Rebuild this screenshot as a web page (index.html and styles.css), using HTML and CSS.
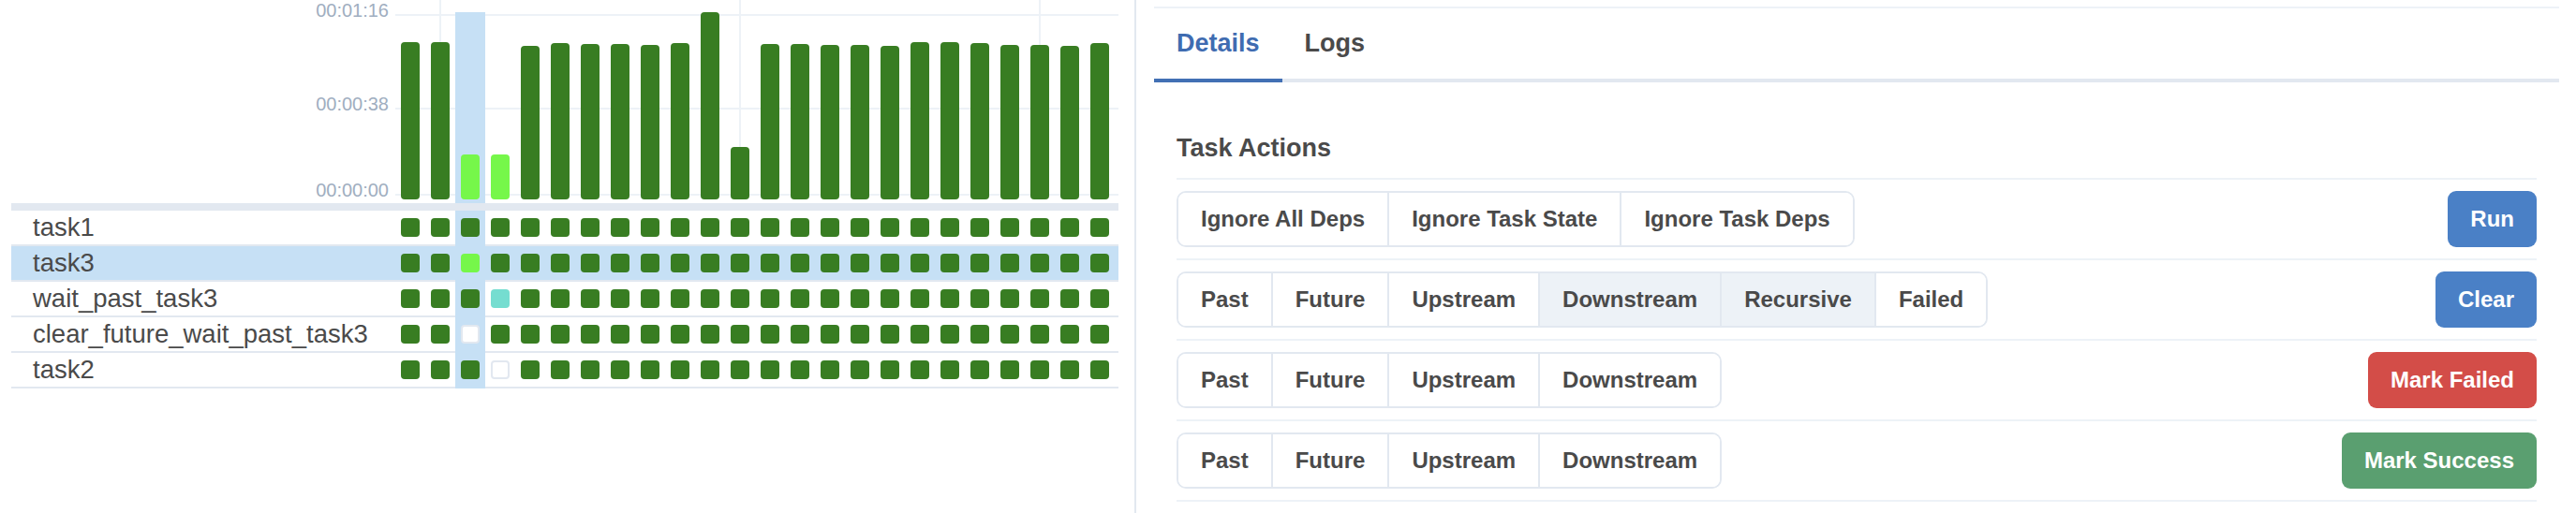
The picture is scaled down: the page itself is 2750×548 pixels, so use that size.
FILE: index.html
```html
<!DOCTYPE html>
<html lang="en">
<head>
<meta charset="utf-8">
<title>Grid</title>
<link rel="stylesheet" href="styles.css">
</head>
<body>
<div class="page">
  <section class="grid-panel">
    <div class="chart">
      <div class="axis">
        <span class="axis-label l-top">00:01:16</span>
        <span class="axis-label l-mid">00:00:38</span>
        <span class="axis-label l-bot">00:00:00</span>
      </div>
      <div class="plot">
        <div class="gl-h h1"></div>
        <div class="gl-h h2"></div>
        <div class="gl-h h3"></div>
        <div class="gl-v v1"></div>
        <div class="gl-v v2"></div>
        <div class="gl-v v3"></div>
        <div class="col"><div class="bar" style="height:168px"></div></div>
        <div class="col"><div class="bar" style="height:168px"></div></div>
        <div class="col hl"><div class="bar lime" style="height:48px"></div></div>
        <div class="col"><div class="bar lime" style="height:48px"></div></div>
        <div class="col"><div class="bar" style="height:164px"></div></div>
        <div class="col"><div class="bar" style="height:167px"></div></div>
        <div class="col"><div class="bar" style="height:166px"></div></div>
        <div class="col"><div class="bar" style="height:166px"></div></div>
        <div class="col"><div class="bar" style="height:165px"></div></div>
        <div class="col"><div class="bar" style="height:167px"></div></div>
        <div class="col"><div class="bar" style="height:200px"></div></div>
        <div class="col"><div class="bar" style="height:56px"></div></div>
        <div class="col"><div class="bar" style="height:166px"></div></div>
        <div class="col"><div class="bar" style="height:166px"></div></div>
        <div class="col"><div class="bar" style="height:165px"></div></div>
        <div class="col"><div class="bar" style="height:165px"></div></div>
        <div class="col"><div class="bar" style="height:164px"></div></div>
        <div class="col"><div class="bar" style="height:168px"></div></div>
        <div class="col"><div class="bar" style="height:168px"></div></div>
        <div class="col"><div class="bar" style="height:167px"></div></div>
        <div class="col"><div class="bar" style="height:165px"></div></div>
        <div class="col"><div class="bar" style="height:165px"></div></div>
        <div class="col"><div class="bar" style="height:164px"></div></div>
        <div class="col"><div class="bar" style="height:167px"></div></div>
      </div>
    </div>
    <div class="sep"></div>
    <div class="rows">
      <div class="row">
        <div class="name">task1</div>
        <div class="cells">
          <div class="cell"><div class="sq"></div></div><div class="cell"><div class="sq"></div></div><div class="cell hl"><div class="sq"></div></div><div class="cell"><div class="sq"></div></div>
          <div class="cell"><div class="sq"></div></div><div class="cell"><div class="sq"></div></div><div class="cell"><div class="sq"></div></div><div class="cell"><div class="sq"></div></div>
          <div class="cell"><div class="sq"></div></div><div class="cell"><div class="sq"></div></div><div class="cell"><div class="sq"></div></div><div class="cell"><div class="sq"></div></div>
          <div class="cell"><div class="sq"></div></div><div class="cell"><div class="sq"></div></div><div class="cell"><div class="sq"></div></div><div class="cell"><div class="sq"></div></div>
          <div class="cell"><div class="sq"></div></div><div class="cell"><div class="sq"></div></div><div class="cell"><div class="sq"></div></div><div class="cell"><div class="sq"></div></div>
          <div class="cell"><div class="sq"></div></div><div class="cell"><div class="sq"></div></div><div class="cell"><div class="sq"></div></div><div class="cell"><div class="sq"></div></div>
        </div>
      </div>
      <div class="row sel">
        <div class="name">task3</div>
        <div class="cells">
          <div class="cell"><div class="sq"></div></div><div class="cell"><div class="sq"></div></div><div class="cell hl"><div class="sq lime"></div></div><div class="cell"><div class="sq"></div></div>
          <div class="cell"><div class="sq"></div></div><div class="cell"><div class="sq"></div></div><div class="cell"><div class="sq"></div></div><div class="cell"><div class="sq"></div></div>
          <div class="cell"><div class="sq"></div></div><div class="cell"><div class="sq"></div></div><div class="cell"><div class="sq"></div></div><div class="cell"><div class="sq"></div></div>
          <div class="cell"><div class="sq"></div></div><div class="cell"><div class="sq"></div></div><div class="cell"><div class="sq"></div></div><div class="cell"><div class="sq"></div></div>
          <div class="cell"><div class="sq"></div></div><div class="cell"><div class="sq"></div></div><div class="cell"><div class="sq"></div></div><div class="cell"><div class="sq"></div></div>
          <div class="cell"><div class="sq"></div></div><div class="cell"><div class="sq"></div></div><div class="cell"><div class="sq"></div></div><div class="cell"><div class="sq"></div></div>
        </div>
      </div>
      <div class="row">
        <div class="name">wait_past_task3</div>
        <div class="cells">
          <div class="cell"><div class="sq"></div></div><div class="cell"><div class="sq"></div></div><div class="cell hl"><div class="sq"></div></div><div class="cell"><div class="sq teal"></div></div>
          <div class="cell"><div class="sq"></div></div><div class="cell"><div class="sq"></div></div><div class="cell"><div class="sq"></div></div><div class="cell"><div class="sq"></div></div>
          <div class="cell"><div class="sq"></div></div><div class="cell"><div class="sq"></div></div><div class="cell"><div class="sq"></div></div><div class="cell"><div class="sq"></div></div>
          <div class="cell"><div class="sq"></div></div><div class="cell"><div class="sq"></div></div><div class="cell"><div class="sq"></div></div><div class="cell"><div class="sq"></div></div>
          <div class="cell"><div class="sq"></div></div><div class="cell"><div class="sq"></div></div><div class="cell"><div class="sq"></div></div><div class="cell"><div class="sq"></div></div>
          <div class="cell"><div class="sq"></div></div><div class="cell"><div class="sq"></div></div><div class="cell"><div class="sq"></div></div><div class="cell"><div class="sq"></div></div>
        </div>
      </div>
      <div class="row">
        <div class="name">clear_future_wait_past_task3</div>
        <div class="cells">
          <div class="cell"><div class="sq"></div></div><div class="cell"><div class="sq"></div></div><div class="cell hl"><div class="sq empty"></div></div><div class="cell"><div class="sq"></div></div>
          <div class="cell"><div class="sq"></div></div><div class="cell"><div class="sq"></div></div><div class="cell"><div class="sq"></div></div><div class="cell"><div class="sq"></div></div>
          <div class="cell"><div class="sq"></div></div><div class="cell"><div class="sq"></div></div><div class="cell"><div class="sq"></div></div><div class="cell"><div class="sq"></div></div>
          <div class="cell"><div class="sq"></div></div><div class="cell"><div class="sq"></div></div><div class="cell"><div class="sq"></div></div><div class="cell"><div class="sq"></div></div>
          <div class="cell"><div class="sq"></div></div><div class="cell"><div class="sq"></div></div><div class="cell"><div class="sq"></div></div><div class="cell"><div class="sq"></div></div>
          <div class="cell"><div class="sq"></div></div><div class="cell"><div class="sq"></div></div><div class="cell"><div class="sq"></div></div><div class="cell"><div class="sq"></div></div>
        </div>
      </div>
      <div class="row">
        <div class="name">task2</div>
        <div class="cells">
          <div class="cell"><div class="sq"></div></div><div class="cell"><div class="sq"></div></div><div class="cell hl"><div class="sq"></div></div><div class="cell"><div class="sq empty"></div></div>
          <div class="cell"><div class="sq"></div></div><div class="cell"><div class="sq"></div></div><div class="cell"><div class="sq"></div></div><div class="cell"><div class="sq"></div></div>
          <div class="cell"><div class="sq"></div></div><div class="cell"><div class="sq"></div></div><div class="cell"><div class="sq"></div></div><div class="cell"><div class="sq"></div></div>
          <div class="cell"><div class="sq"></div></div><div class="cell"><div class="sq"></div></div><div class="cell"><div class="sq"></div></div><div class="cell"><div class="sq"></div></div>
          <div class="cell"><div class="sq"></div></div><div class="cell"><div class="sq"></div></div><div class="cell"><div class="sq"></div></div><div class="cell"><div class="sq"></div></div>
          <div class="cell"><div class="sq"></div></div><div class="cell"><div class="sq"></div></div><div class="cell"><div class="sq"></div></div><div class="cell"><div class="sq"></div></div>
        </div>
      </div>
    </div>
  </section>

  <section class="detail-panel">
    <div class="tabs">
      <div class="tablist">
        <button class="tab active">Details</button>
        <button class="tab">Logs</button>
      </div>
      <div class="tabpanel">
        <h2 class="section-title">Task Actions</h2>
        <div class="action-row">
          <div class="btn-group">
            <button class="opt">Ignore All Deps</button>
            <button class="opt">Ignore Task State</button>
            <button class="opt">Ignore Task Deps</button>
          </div>
          <button class="btn blue">Run</button>
        </div>
        <div class="action-row">
          <div class="btn-group">
            <button class="opt">Past</button>
            <button class="opt">Future</button>
            <button class="opt">Upstream</button>
            <button class="opt on">Downstream</button>
            <button class="opt on">Recursive</button>
            <button class="opt">Failed</button>
          </div>
          <button class="btn blue">Clear</button>
        </div>
        <div class="action-row">
          <div class="btn-group">
            <button class="opt">Past</button>
            <button class="opt">Future</button>
            <button class="opt">Upstream</button>
            <button class="opt">Downstream</button>
          </div>
          <button class="btn red">Mark Failed</button>
        </div>
        <div class="action-row">
          <div class="btn-group">
            <button class="opt">Past</button>
            <button class="opt">Future</button>
            <button class="opt">Upstream</button>
            <button class="opt">Downstream</button>
          </div>
          <button class="btn green">Mark Success</button>
        </div>
      </div>
    </div>
  </section>
</div>
</body>
</html>
```
FILE: styles.css
```css
* { box-sizing: border-box; }
html, body { margin: 0; padding: 0; background: #fff; }
body {
  font-family: "Liberation Sans", Arial, Helvetica, sans-serif;
  color: #4a4a4a;
  width: 2750px;
  height: 548px;
  overflow: hidden;
}
button {
  font-family: inherit;
  border: 0;
  margin: 0;
  background: none;
  cursor: pointer;
}
.page { display: flex; height: 548px; }

/* ---------- left grid panel ---------- */
.grid-panel {
  flex: none;
  width: 1213px;
  padding: 0 17px 0 12px;
  border-right: 2px solid #e2e8f0;
}
.chart { display: flex; height: 217px; }
.axis { position: relative; width: 410px; flex: none; }
.axis-label {
  position: absolute;
  right: 7px;
  font-size: 20px;
  line-height: 20px;
  color: #a0aec0;
  white-space: nowrap;
}
.l-top { top: 1px; }
.l-mid { top: 101px; }
.l-bot { top: 193px; }

.plot {
  position: relative;
  display: flex;
  width: 772px;
  padding-right: 4px;
}
.gl-h { position: absolute; left: 0; right: 0; height: 2px; background: #edf2f7; }
.h1 { top: 15px; }
.h2 { top: 115px; }
.h3 { top: 207px; }
.gl-v { position: absolute; top: 0; width: 2px; height: 209px; background: #edf2f7; }
.v1 { left: 47px; }
.v2 { left: 367px; }
.v3 { left: 687px; }

.col {
  position: relative;
  flex: none;
  width: 32px;
  display: flex;
  align-items: flex-end;
  justify-content: center;
  padding-bottom: 4px;
}
.col.hl { margin-top: 13px; background: #c6e0f5; }
.bar { width: 20px; border-radius: 4px; background: #387d22; }
.bar.lime { background: #76f74a; }

.sep { height: 8px; background: #e2e8f0; }

.row {
  display: flex;
  height: 38px;
  border-bottom: 2px solid #e2e8f0;
}
.row.sel { background: #c6e0f5; }
.name {
  flex: none;
  width: 410px;
  padding-left: 23px;
  font-size: 27.5px;
  line-height: 36px;
  white-space: nowrap;
  color: #4a4a4a;
}
.cells { display: flex; }
.cell {
  flex: none;
  width: 32px;
  display: flex;
  align-items: center;
  justify-content: center;
}
.cell.hl { background: #c6e0f5; box-shadow: 0 2px 0 #c6e0f5; }
.sq { width: 20px; height: 20px; border-radius: 4px; background: #387d22; }
.sq.lime { background: #76f74a; }
.sq.teal { background: #75ddd0; }
.sq.empty { background: #fff; border: 2px solid #e2e8f0; }

/* ---------- right details panel ---------- */
.detail-panel { flex: 1; padding: 7px 18px 0 19px; }
.tabs { border-top: 2px solid #edf2f7; }
.tablist { display: flex; border-bottom: 4px solid #e2e8f0; }
.tab {
  padding: 0 24px;
  font-size: 27px;
  font-weight: 700;
  line-height: 75px;
  color: #4a4a4a;
  border-bottom: 4px solid transparent;
  margin-bottom: -4px;
}
.tab.active { color: #3f6cb1; border-bottom-color: #4270b4; }

.tabpanel { padding: 54px 24px 0; }
.section-title {
  margin: 0;
  font-size: 27px;
  font-weight: 700;
  line-height: 32px;
  padding-bottom: 16px;
  border-bottom: 2px solid #edf2f7;
  color: #4a4a4a;
}
.action-row {
  display: flex;
  justify-content: space-between;
  align-items: center;
  padding: 12px 0;
  border-bottom: 2px solid #edf2f7;
}
.btn-group {
  display: flex;
  height: 60px;
  border: 2px solid #e2e8f0;
  border-radius: 10px;
  overflow: hidden;
}
.opt {
  padding: 0 24px;
  font-size: 24px;
  font-weight: 700;
  line-height: 56px;
  color: #4a4a4a;
  background: #fff;
  white-space: nowrap;
}
.opt + .opt { border-left: 2px solid #e2e8f0; }
.opt.on { background: #edf2f7; }

.btn {
  height: 60px;
  padding: 0 24px;
  border-radius: 9px;
  font-size: 24px;
  font-weight: 700;
  line-height: 60px;
  color: #fff;
  white-space: nowrap;
}
.btn.blue { background: #4a80c6; }
.btn.red { background: #d34d48; }
.btn.green { background: #5a9f70; }
```
